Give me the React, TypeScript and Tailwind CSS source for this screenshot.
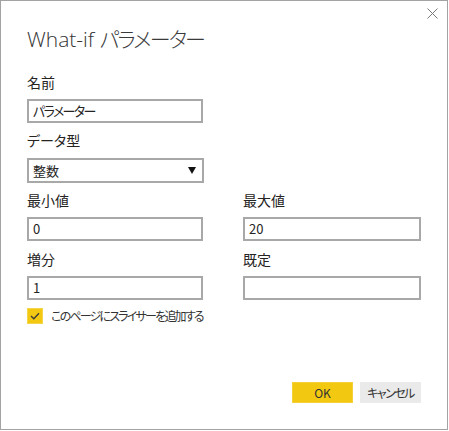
import React from 'react';

const jp = "font-['Noto_Sans_CJK_JP','Noto_Sans',sans-serif] [font-feature-settings:'palt']";

function Field({ label, value, tight }: { label: string; value: string; tight?: boolean }) {
  return (
    <div className="flex flex-col">
      <label className="text-[14px] leading-[20px] text-[#252423] h-[20px]">{label}</label>
      <div
        className={`mt-[7px] h-[24px] border-2 border-[#a8a8a8] bg-white px-[4px] flex items-center text-[13px] text-[#252423] ${
          tight ? 'tracking-[-1.6px]' : ''
        }`}
      >
        {value}
      </div>
    </div>
  );
}

export default function App() {
  return (
    <div className={`relative w-[448px] h-[430px] bg-white border border-[#a3a3a3] ${jp}`}>
      <button className="absolute right-[9px] top-[6px] w-[12px] h-[12px] flex items-center justify-center">
        <svg width="11" height="11" viewBox="0 0 11 11" fill="none" stroke="#7a7a7a" strokeWidth="1">
          <path d="M0.5 0.5 L10.5 10.5 M10.5 0.5 L0.5 10.5" />
        </svg>
      </button>

      <div className="pl-[26px] pr-[26px] pt-[23px] flex flex-col">
        <h1 className="h-[30px] text-[21px] leading-[30px] font-light text-[#333] font-['Open_Sans','Noto_Sans_CJK_JP',sans-serif]">
          What-if <span className="tracking-[-1.8px] text-[#3a3a3a]">パラメーター</span>
        </h1>

        <div className="mt-[18px] w-[176px]">
          <Field label="名前" value="パラメーター" tight />
        </div>

        <div className="mt-[7px] w-[177px] flex flex-col">
          <label className="text-[14px] leading-[20px] text-[#252423] h-[20px]">データ型</label>
          <div className="mt-[8px] h-[25px] border-2 border-[#a8a8a8] bg-white pl-[4px] pr-[6px] flex items-center justify-between text-[13px] text-[#252423]">
            <span>整数</span>
            <svg width="8" height="7" viewBox="0 0 8 7">
              <path d="M0 0 H8 L4 7 Z" fill="#111" />
            </svg>
          </div>
        </div>

        <div className="mt-[7px] grid grid-cols-[176px_178px] gap-x-[40px] gap-y-[8px]">
          <Field label="最小値" value="0" />
          <Field label="最大値" value="20" />
          <Field label="増分" value="1" />
          <Field label="既定" value="" />
        </div>

        <div className="mt-[7px] flex items-center gap-[8px]">
          <div className="w-[16px] h-[16px] bg-[#f2c811] border border-[#f5d54a] flex items-center justify-center">
            <svg width="10" height="8" viewBox="0 0 10 8" fill="none" stroke="#3a3a3a" strokeWidth="1.3">
              <path d="M1 4 L3.8 6.8 L9 1.2" />
            </svg>
          </div>
          <span className="text-[12px] leading-[18px] text-[#333] tracking-[-1.8px]">このページにスライサーを追加する</span>
        </div>
      </div>

      <div className="absolute right-[26px] bottom-[26px] flex gap-[7px]">
        <button className="w-[61px] h-[21px] bg-[#f2c811] border border-[#f4d03a] text-[12px] text-[#333] flex items-center justify-center">
          OK
        </button>
        <button className="w-[61px] h-[21px] bg-[#eaeaea] text-[12px] text-[#333] tracking-[-1.5px] flex items-center justify-center">
          キャンセル
        </button>
      </div>
    </div>
  );
}
